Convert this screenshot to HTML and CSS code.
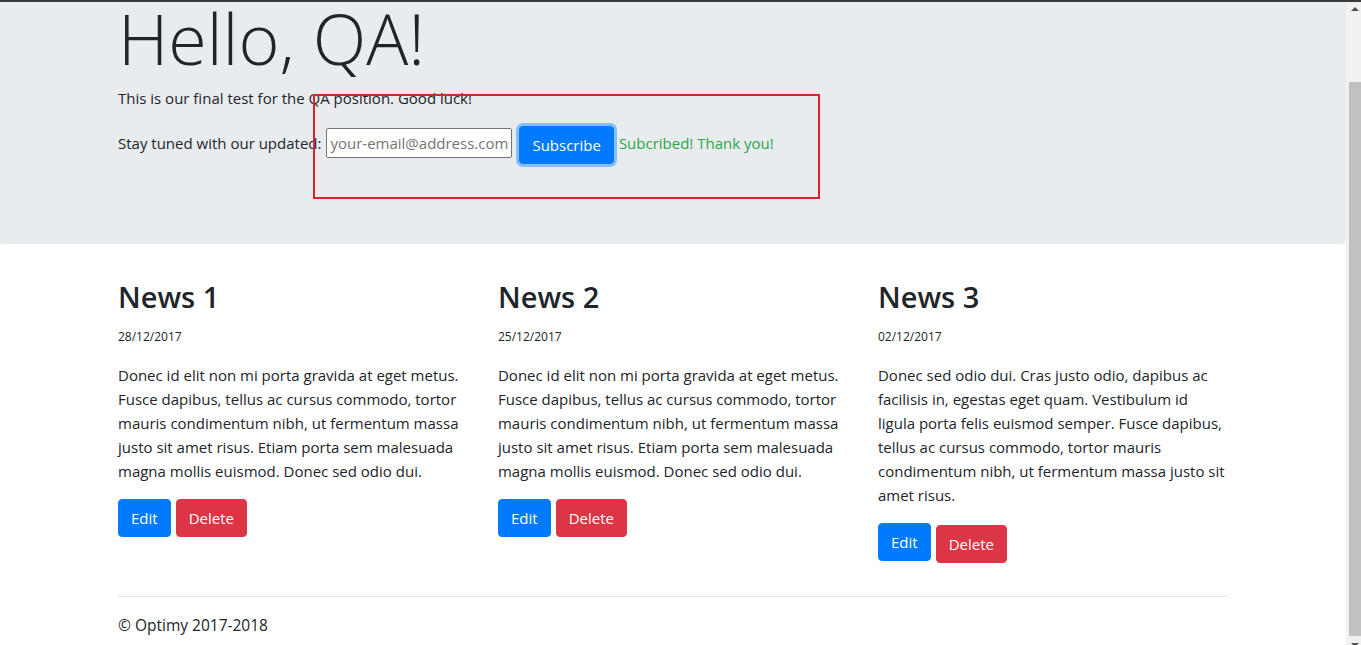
FILE: index.html
```html
<!DOCTYPE html>
<html lang="en">
<head>
<meta charset="utf-8">
<title>Hello, QA!</title>
<link rel="stylesheet" href="styles.css">
</head>
<body>
<div class="topbar"></div>
<div class="window">
  <div class="page">
    <section class="jumbotron">
      <div class="container">
        <h1 class="display">Hello, QA!</h1>
        <p class="intro">This is our final test for the QA position. Good luck!</p>
        <form class="subscribe">
          <span class="sub-label">Stay tuned with our updated:</span>
          <input class="sub-input" type="email" placeholder="your-email@address.com">
          <button class="btn btn-primary btn-focus" type="button">Subscribe</button>
          <span class="sub-ok">Subcribed! Thank you!</span>
        </form>
      </div>
    </section>
    <div class="annotation"></div>

    <main class="container">
      <div class="row">
        <article class="col">
          <h2>News 1</h2>
          <p class="date"><small>28/12/2017</small></p>
          <p>Donec id elit non mi porta gravida at eget metus. Fusce dapibus, tellus ac cursus commodo, tortor mauris condimentum nibh, ut fermentum massa justo sit amet risus. Etiam porta sem malesuada magna mollis euismod. Donec sed odio dui.</p>
          <div class="actions">
            <a class="btn btn-primary">Edit</a>
            <button class="btn btn-danger" type="button">Delete</button>
          </div>
        </article>
        <article class="col">
          <h2>News 2</h2>
          <p class="date"><small>25/12/2017</small></p>
          <p>Donec id elit non mi porta gravida at eget metus. Fusce dapibus, tellus ac cursus commodo, tortor mauris condimentum nibh, ut fermentum massa justo sit amet risus. Etiam porta sem malesuada magna mollis euismod. Donec sed odio dui.</p>
          <div class="actions">
            <a class="btn btn-primary">Edit</a>
            <button class="btn btn-danger" type="button">Delete</button>
          </div>
        </article>
        <article class="col">
          <h2>News 3</h2>
          <p class="date"><small>02/12/2017</small></p>
          <p>Donec sed odio dui. Cras justo odio, dapibus ac facilisis in, egestas eget quam. Vestibulum id ligula porta felis euismod semper. Fusce dapibus, tellus ac cursus commodo, tortor mauris condimentum nibh, ut fermentum massa justo sit amet risus.</p>
          <div class="actions">
            <a class="btn btn-primary">Edit</a>
            <button class="btn btn-danger btn-low" type="button">Delete</button>
          </div>
        </article>
      </div>
      <hr class="rule">
      <footer class="footer">
        <p>&copy; Optimy 2017-2018</p>
      </footer>
    </main>
  </div>
  <div class="scrollbar">
    <div class="sb-arrow sb-up"></div>
    <div class="sb-space"></div>
    <div class="sb-thumb"></div>
    <div class="sb-arrow sb-down"></div>
  </div>
</div>
</body>
</html>
```

FILE: styles.css
```css
* { box-sizing: border-box; }

html, body {
  margin: 0;
  height: 645px;
  overflow: hidden;
}

body {
  font-family: "Open Sans", "Noto Sans", "Liberation Sans", sans-serif;
  font-size: 15px;
  line-height: 24px;
  color: #212529;
  background: #fff;
  display: flex;
  flex-direction: column;
}

.topbar {
  height: 2px;
  background: #3a3a3a;
  flex: none;
}

.window {
  flex: 1;
  display: flex;
  min-height: 0;
}

.page {
  flex: 1;
  position: relative;
  min-width: 0;
}

.container {
  max-width: 1140px;
  margin: 0 auto;
  padding: 0 15px;
}

/* Jumbotron */
.jumbotron {
  background: #e9ecef;
  border-radius: 0 0 5px 2px;
  padding: 0 0 64px;
  margin-bottom: 34px;
}

.display {
  font-size: 70px;
  font-weight: 300;
  line-height: 72px;
  margin: 0 0 12px;
}

.intro {
  margin: 0 0 16px;
}

.subscribe {
  display: flex;
  align-items: flex-start;
  margin: 0 0 16px;
}

.sub-label {
  margin-top: 5px;
}

.sub-input {
  margin: 2px 0 0 5px;
  width: 186px;
  height: 30px;
  padding: 1px 3px;
  border: 1px solid #767676;
  border-radius: 2px;
  background: #fff;
  font-family: inherit;
  font-size: 15px;
  color: #212529;
}

.sub-input::placeholder {
  color: #757575;
}

.subscribe .btn {
  margin-left: 7px;
}

.sub-ok {
  margin: 5px 0 0 5px;
  color: #28a745;
}

/* Buttons */
.btn {
  display: inline-block;
  font-family: inherit;
  font-size: 15px;
  line-height: 24px;
  padding: 6px 12px;
  border: 1px solid transparent;
  border-radius: 4px;
  color: #fff;
  cursor: pointer;
  text-decoration: none;
}

.btn-primary {
  background: #007bff;
  border-color: #007bff;
}

.btn-danger {
  background: #dc3545;
  border-color: #dc3545;
}

.btn-focus {
  box-shadow: 0 0 0 3px rgba(38, 143, 255, 0.5);
}

.btn-low {
  margin-top: 2px;
}

/* News */
.row {
  display: flex;
  margin: 0 -15px;
}

.col {
  flex: 0 0 33.3333%;
  padding: 0 15px;
}

.col h2 {
  font-size: 29px;
  font-weight: 600;
  line-height: 38px;
  margin: 0 0 7px;
}

.col p {
  margin: 0 0 16px;
}

.col p.date {
  margin-bottom: 14px;
}

.date small {
  font-size: 12px;
}

.actions {
  display: flex;
  align-items: flex-start;
  gap: 5px;
  margin-bottom: 17px;
}

.rule {
  margin: 16px 0;
  border: 0;
  border-top: 1px solid rgba(0, 0, 0, 0.1);
}

.footer p {
  margin: 0;
  font-size: 15.5px;
}

/* Annotation overlay */
.annotation {
  position: absolute;
  left: 313px;
  top: 92px;
  width: 507px;
  height: 105px;
  border: 2px solid #e0232b;
  pointer-events: none;
}

/* Scrollbar */
.scrollbar {
  width: 15px;
  flex: none;
  background: #f1f1f1;
  display: flex;
  flex-direction: column;
}

.sb-arrow {
  height: 15px;
  flex: none;
  display: flex;
  align-items: center;
  justify-content: center;
  padding-left: 2px;
}

.sb-up::before,
.sb-down::before {
  content: "";
  width: 0;
  height: 0;
  border-left: 4px solid transparent;
  border-right: 4px solid transparent;
}

.sb-up::before {
  border-bottom: 4px solid #505050;
  margin-top: -2px;
}

.sb-down::before {
  border-top: 4px solid #505050;
  margin-top: 2px;
}

.sb-space {
  height: 65px;
  flex: none;
}

.sb-thumb {
  height: 554px;
  flex: none;
  margin-left: 3px;
  background: #c1c1c1;
}
```
